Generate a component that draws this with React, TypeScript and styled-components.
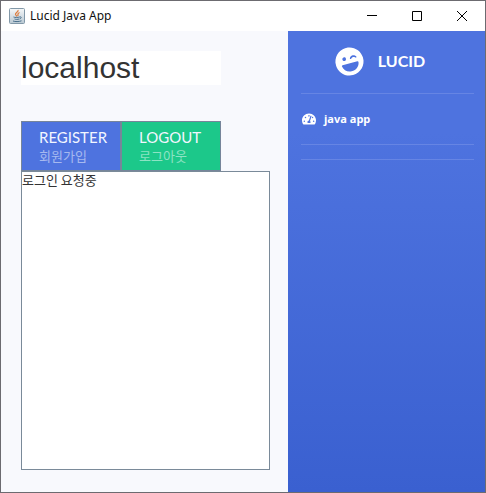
import React from "react";
import styled, { createGlobalStyle } from "styled-components";
import { FaLaughWink, FaTachometerAlt } from "react-icons/fa";

const GlobalStyle = createGlobalStyle`
  *, *::before, *::after { box-sizing: border-box; }
  body { margin: 0; }
  button, input, textarea { margin: 0; border-radius: 0; }
`;

const Frame = styled.div`
  display: flex;
  flex-direction: column;
  min-height: 100vh;
  border: 1px solid #6c6b70;
  background: #f8f9fd;
  font-family: "Open Sans", "Noto Sans CJK KR", sans-serif;
`;

const TitleBar = styled.header`
  display: flex;
  align-items: center;
  height: 30px;
  padding-left: 8px;
  background: #fff;
`;

const Title = styled.h1`
  flex: 1;
  margin: 0 0 0 5px;
  color: #111;
  font: 400 12px/16px "Noto Sans", sans-serif;
`;

const WindowButton = styled.button`
  display: grid;
  place-items: center;
  width: 45px;
  height: 30px;
  padding: 0 2px 0 0;
  border: 0;
  background: transparent;
`;

const WindowControls = styled.div`
  display: flex;
`;

const Body = styled.div`
  display: flex;
  flex: 1;
`;

const Main = styled.main`
  display: flex;
  flex: 1;
  flex-direction: column;
  align-items: flex-start;
  min-width: 0;
  padding: 20px 18px 22px 20px;
`;

const HostInput = styled.input`
  width: 200px;
  height: 34px;
  padding: 0;
  border: 0;
  background: #fff;
  color: #333;
  font: 400 30px/34px "Liberation Sans", Arial, sans-serif;
`;

const Actions = styled.div`
  display: flex;
  margin-top: 36px;
`;

const ActionButton = styled.button<{ $color: string }>`
  display: flex;
  flex-direction: column;
  align-items: flex-start;
  justify-content: center;
  width: 100px;
  height: 50px;
  padding: 0 0 0 17px;
  border: 1px solid #76859a;
  background: ${(p) => p.$color};
  color: #f2f6ff;
  font: 400 15px/18px Lato, sans-serif;
`;

const ActionNote = styled.span`
  color: rgba(255, 255, 255, 0.5);
  font: 400 13px/19px "Noto Sans CJK KR", sans-serif;
`;

const Log = styled.textarea`
  flex: 1;
  width: 100%;
  min-height: 120px;
  padding: 0;
  border: 1px solid #7a8a99;
  outline: 0;
  background: #fff;
  color: #333;
  font: 400 13px/16px "Noto Sans CJK KR", sans-serif;
  resize: none;
`;

const Sidebar = styled.nav`
  width: 197px;
  padding: 0 11px 0 13px;
  background: linear-gradient(#4e73df, #4e73df 22%, #3a60d0);
  color: #fff;
`;

const Brand = styled.div`
  display: flex;
  align-items: center;
  justify-content: center;
  gap: 14px;
  height: 62px;
  padding: 0 15px 2px 0;
  font: 700 16px/20px Lato, sans-serif;
`;

const BrandIcon = styled(FaLaughWink)`
  width: 29px;
  height: 29px;
  transform: rotate(-15deg);
`;

const Divider = styled.hr`
  height: 1px;
  margin: 0;
  border: 0;
  background: #6685e4;
`;

const NavLink = styled.a`
  display: flex;
  align-items: center;
  gap: 8px;
  height: 50px;
  padding-left: 1px;
  color: #fff;
  font: 700 11px/16px "Open Sans", sans-serif;
  text-decoration: none;
`;

const Gauge = styled(FaTachometerAlt)`
  width: 14px;
  height: 14px;
`;

const Spacer = styled.div`
  height: 14px;
`;

const JavaIcon = () => (
  <svg width="16" height="16" viewBox="0 0 16 16" aria-hidden="true" fill="none">
    <defs>
      <linearGradient id="tile" x1="0" y1="0" x2="0" y2="1">
        <stop offset="0" stopColor="#f6f8f9" />
        <stop offset="1" stopColor="#b9c8d2" />
      </linearGradient>
    </defs>
    <rect x="0.5" y="0.5" width="15" height="15" rx="1" fill="url(#tile)" stroke="#8298a8" />
    <path d="M9 2c1 2-3 2.500-2.500 4.500L8 8.500M10.500 4.500C8 5.500 9 6.500 9 8" stroke="#dc7838" strokeWidth="1.200" />
    <path d="M4.500 9c1 .6 4.500.6 6 0M5.500 11c1 .5 3.500.5 4.500 0M10.500 9c2.500-.8 2 1.500 0 2M4 13c2 .8 6 .8 8.500-.2" stroke="#496f8b" />
  </svg>
);

const App = () => (
  <>
    <GlobalStyle />
    <Frame>
      <TitleBar>
        <JavaIcon />
        <Title>Lucid Java App</Title>
        <WindowControls>
          <WindowButton type="button" aria-label="Minimize">
            <svg width="10" height="10"><path d="M0 4.500H10" stroke="#000" /></svg>
          </WindowButton>
          <WindowButton type="button" aria-label="Maximize">
            <svg width="10" height="10"><path d="M.5.500h9v9h-9z" stroke="#000" fill="none" /></svg>
          </WindowButton>
          <WindowButton type="button" aria-label="Close">
            <svg width="10" height="10"><path d="M0 0L10 10M10 0L0 10" stroke="#000" /></svg>
          </WindowButton>
        </WindowControls>
      </TitleBar>
      <Body>
        <Main>
          <HostInput aria-label="Host" defaultValue="localhost" />
          <Actions>
            <ActionButton type="button" $color="#4e73df">
              REGISTER
              <ActionNote>회원가입</ActionNote>
            </ActionButton>
            <ActionButton type="button" $color="#1cc88a">
              LOGOUT
              <ActionNote>로그아웃</ActionNote>
            </ActionButton>
          </Actions>
          <Log aria-label="Log" defaultValue="로그인 요청중" />
        </Main>
        <Sidebar>
          <Brand>
            <BrandIcon aria-hidden="true" />
            <span>LUCID</span>
          </Brand>
          <Divider />
          <NavLink href="#">
            <Gauge aria-hidden="true" />
            java app
          </NavLink>
          <Divider />
          <Spacer />
          <Divider />
        </Sidebar>
      </Body>
    </Frame>
  </>
);

export default App;
